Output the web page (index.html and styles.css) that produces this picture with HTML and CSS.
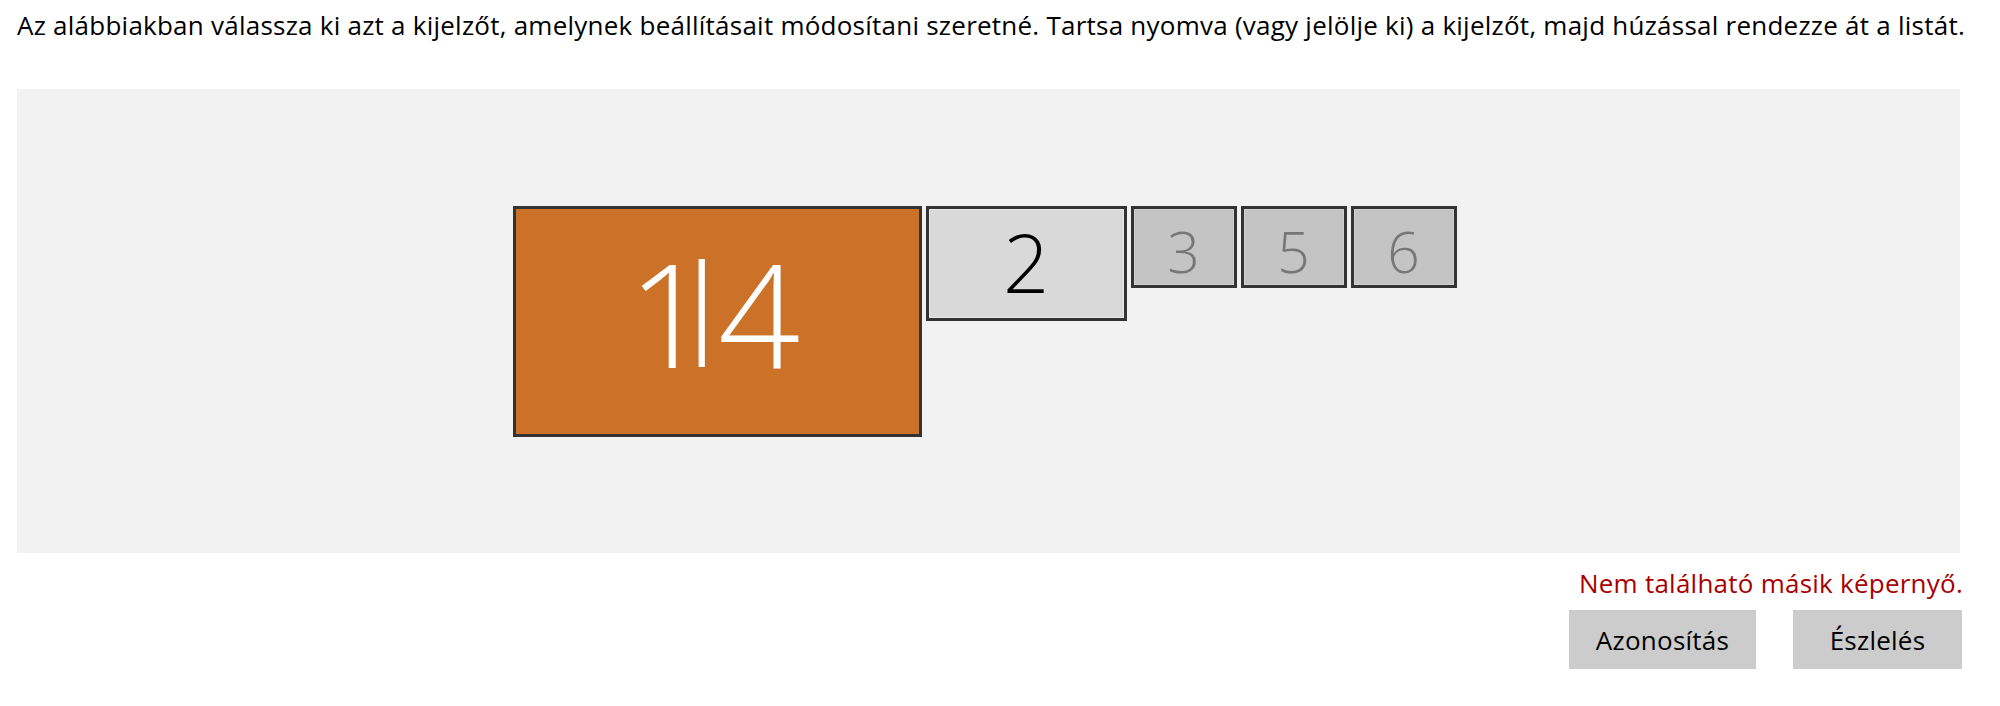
FILE: index.html
```html
<!DOCTYPE html>
<html lang="hu">
<head>
<meta charset="utf-8">
<title>Kijelzők</title>
<link rel="stylesheet" href="styles.css">
</head>
<body>
<div class="page">
  <p class="intro">Az alábbiakban válassza ki azt a kijelzőt, amelynek beállításait módosítani szeretné. Tartsa nyomva (vagy jelölje ki) a kijelzőt, majd húzással rendezze át a listát.</p>
  <div class="canvas">
    <div class="monitors">
      <div class="mon mon-main"><span class="d1">1</span><span class="bar">|</span><span class="d4">4</span></div>
      <div class="mon mon-second">2</div>
      <div class="mon mon-small">3</div>
      <div class="mon mon-small">5</div>
      <div class="mon mon-small">6</div>
    </div>
  </div>
  <p class="status">Nem található másik képernyő.</p>
  <div class="actions">
    <button class="btn btn-identify">Azonosítás</button>
    <button class="btn btn-detect">Észlelés</button>
  </div>
</div>
</body>
</html>
```

FILE: styles.css
```css
html, body {
  margin: 0;
  background: #ffffff;
}
body {
  font-family: "Open Sans", "Noto Sans", sans-serif;
  color: #000;
}
.page {
  width: 1943px;
  padding: 0 40px 0 17px;
}
.intro {
  margin: 0;
  padding-top: 5px;
  font-size: 26px;
  line-height: 40px;
  letter-spacing: 0.24px;
  white-space: nowrap;
}
.canvas {
  margin-top: 44px;
  height: 464px;
  background: #f2f2f2;
  display: flex;
  align-items: center;
  justify-content: center;
  padding-right: 8px;
  box-sizing: border-box;
}
.monitors {
  display: flex;
  align-items: flex-start;
  gap: 4px;
}
.mon {
  box-sizing: border-box;
  border: 3px solid #333333;
  display: flex;
  align-items: center;
  justify-content: center;
  font-weight: 300;
  line-height: 1;
}
.mon-main {
  width: 409px;
  height: 231px;
  background: #cc7128;
  color: #ffffff;
  font-size: 144px;
  padding-bottom: 18px;
  padding-right: 6px;
}
.d1 { letter-spacing: -47px; }
.bar {
  display: inline-block;
  transform: scaleY(0.74);
  transform-origin: 50% 16%;
  letter-spacing: -23px;
}
.mon-second {
  width: 201px;
  height: 115px;
  background: #d9d9d9;
  color: #000;
  font-size: 81px;
  padding-bottom: 4px;
  box-shadow: inset 0 0 0 1px #e8e8e8;
}
.mon-small {
  width: 106px;
  height: 82px;
  background: #c4c4c4;
  color: #777777;
  font-size: 57px;
  padding-top: 9px;
  box-shadow: inset 0 0 0 1px #d0d0d0;
}
.status {
  margin: 0;
  padding-top: 10px;
  text-align: right;
  font-size: 26px;
  line-height: 40px;
  color: #a80000;
  margin-right: -3px;
  letter-spacing: 0.24px;
}
.actions {
  display: flex;
  justify-content: flex-end;
  gap: 37px;
  margin-top: 7px;
  margin-right: -2px;
}
.btn {
  height: 59px;
  border: none;
  background: #cccccc;
  font-family: "Open Sans", "Noto Sans", sans-serif;
  font-size: 26px;
  color: #000;
  padding: 0;
  letter-spacing: 0.24px;
}
.btn-identify { width: 187px; }
.btn-detect { width: 169px; }
```
